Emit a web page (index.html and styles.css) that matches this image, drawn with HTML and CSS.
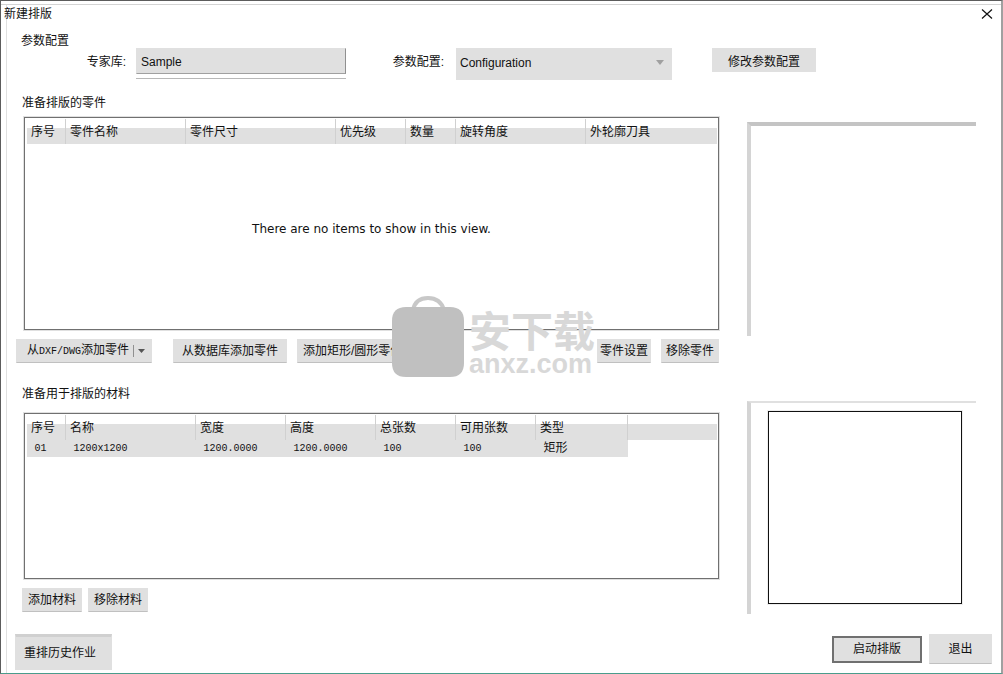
FILE: index.html
```html
<!DOCTYPE html>
<html lang="zh-CN">
<head>
<meta charset="utf-8">
<title>新建排版</title>
<link rel="stylesheet" href="styles.css">
</head>
<body>
<div class="window">
  <header class="titlebar">
    <h1 class="title">新建排版</h1>
    <button class="close" type="button" aria-label="关闭"><svg width="12" height="12" viewBox="0 0 12 12"><path d="M1 1.500 L11 10.500 M11 1.500 L1 10.500" stroke="#111" stroke-width="1.200" fill="none"/></svg></button>
  </header>

  <section class="config">
    <h2 class="heading">参数配置</h2>
    <div class="config-row">
      <label class="label" for="library">专家库:</label>
      <input class="field" id="library" type="text" value="Sample">
      <label class="label label-second" for="configuration">参数配置:</label>
      <div class="select-wrap">
        <select class="select" id="configuration"><option>Configuration</option></select>
        <svg class="arrow" width="8" height="5" viewBox="0 0 8 5"><path d="M0 0H8L4 5Z" fill="#a0a0a0"/></svg>
      </div>
      <button class="btn btn-config" type="button">修改参数配置</button>
    </div>
  </section>

  <main class="content">
    <section class="parts">
      <h2 class="heading">准备排版的零件</h2>
      <div class="panel panel-parts">
        <table class="grid">
          <colgroup><col class="c39"><col class="c120"><col class="c150"><col class="c70"><col class="c50"><col class="c130"><col></colgroup>
          <thead><tr><th>序号</th><th>零件名称</th><th>零件尺寸</th><th>优先级</th><th>数量</th><th>旋转角度</th><th>外轮廓刀具</th></tr></thead>
        </table>
        <p class="empty">There are no items to show in this view.</p>
      </div>
      <div class="actions">
        <button class="btn btn-split" type="button"><span>从<span class="mono">DXF/DWG</span>添加零件</span><span class="split"><svg width="7" height="4" viewBox="0 0 7 4"><path d="M0 0H7L3.500 4Z" fill="#555"/></svg></span></button>
        <button class="btn btn-db" type="button">从数据库添加零件</button>
        <button class="btn btn-shape" type="button">添加矩形/圆形零件</button>
        <button class="btn btn-setup" type="button">零件设置</button>
        <button class="btn btn-remove" type="button">移除零件</button>
        <div class="watermark" aria-hidden="true">
          <svg width="72" height="82" viewBox="0 0 72 82"><path d="M21 14C23 4 30 2 36 2S49 4 52 14" fill="none" stroke="#c8c8c8" stroke-width="4"/><path d="M14 11H58Q72 11 72 25V67Q72 81 58 81H14Q0 81 0 67V25Q0 11 14 11Z" fill="#c0c0c0"/></svg>
          <div class="brand"><span class="brand-name">安下载</span><span class="brand-site">anxz.com</span></div>
        </div>
      </div>
    </section>
    <div class="preview preview-part"></div>

    <section class="materials">
      <h2 class="heading">准备用于排版的材料</h2>
      <div class="panel panel-materials">
        <table class="grid">
          <colgroup><col class="c39"><col class="c130"><col class="c90"><col class="c90"><col class="c80"><col class="c80"><col class="c92"><col></colgroup>
          <thead><tr><th>序号</th><th>名称</th><th>宽度</th><th>高度</th><th>总张数</th><th>可用张数</th><th>类型</th><th></th></tr></thead>
          <tbody><tr><td>01</td><td>1200x1200</td><td>1200.0000</td><td>1200.0000</td><td>100</td><td>100</td><td class="kind">矩形</td><td></td></tr></tbody>
        </table>
      </div>
      <div class="actions actions-materials">
        <button class="btn" type="button">添加材料</button>
        <button class="btn" type="button">移除材料</button>
      </div>
    </section>
    <div class="preview preview-material"><div class="sheet"></div></div>
  </main>

  <footer class="footer">
    <button class="btn btn-history" type="button">重排历史作业</button>
    <button class="btn btn-start" type="button">启动排版</button>
    <button class="btn btn-exit" type="button">退出</button>
  </footer>
</div>
</body>
</html>
```
FILE: styles.css
```css
* { box-sizing: border-box; }

body {
  margin: 0;
  background: #fff;
  color: #111;
  font: 12px/16px "Liberation Sans", "Noto Sans CJK SC", sans-serif;
}

h1, h2, p { margin: 0; font-size: 12px; font-weight: 400; }

button, input, select { font: inherit; color: inherit; margin: 0; }

.window {
  min-height: 100vh;
  display: flex;
  flex-direction: column;
  border: 1px solid #5c5c5c;
  border-right: 2px solid #a0a0a0;
  border-bottom-color: #4a9c8c;
  box-shadow: inset 0 3px 0 #fff, inset 0 4px 0 #d4d4d4, inset 5px 0 0 #fff, inset 6px 0 0 #e0e0e0;
}

.titlebar {
  display: flex;
  justify-content: space-between;
  align-items: center;
  height: 25px;
  padding: 0 8px 0 3px;
}

.close { display: flex; padding: 0; border: 0; background: none; }

.config { padding: 7px 26px 0 20px; }
.config-row { display: flex; align-items: flex-start; margin-top: -1px; }
.label { width: 115px; padding-right: 10px; text-align: right; line-height: 29px; }
.label-second { width: 110px; padding-right: 12px; }

.field {
  width: 210px;
  height: 26px;
  padding: 3px 4px 2px;
  border: 1px solid #e0e0e0;
  border-right-color: #909090;
  border-bottom-color: #a0a0a0;
  background: #e0e0e0;
  box-shadow: 0 4px 0 #fff, 0 5px 0 #b8b8b8;
}

.select-wrap { position: relative; width: 216px; }
.select {
  width: 100%;
  height: 32px;
  padding: 0 4px 2px;
  border: 0;
  background: #e0e0e0;
  appearance: none;
}
.arrow { position: absolute; right: 8px; top: 12px; }

.btn {
  height: 24px;
  padding: 0 5px;
  border: 1px solid #e0e0e0;
  border-bottom-color: #c0c0c0;
  background: #e0e0e0;
  white-space: nowrap;
}

.btn-config { width: 104px; margin-left: 40px; border-bottom-color: #e0e0e0; padding-top: 4px; }

.content {
  display: grid;
  grid-template-columns: 695fr 229fr;
  column-gap: 28px;
  row-gap: 22px;
  padding: 15px 25px 0 23px;
}

.content .heading { margin-left: -2px; }

.panel {
  margin-top: 6px;
  border: 1px solid #707070;
  outline: 1px solid #e0e0e0;
  padding: 1px;
}
.panel-parts { height: 213px; }
.panel-materials { height: 166px; margin-top: 11px; }

.grid { width: 100%; border-collapse: collapse; table-layout: fixed; }
.grid th {
  height: 25px;
  padding: 0 0 0 4px;
  font-weight: 400;
  text-align: left;
  background: linear-gradient(#fff 9px, #e0e0e0 9px);
  border-left: 1px solid #d0d0d0;
}
.grid th:first-child { border-left-color: #fff; }
.grid td {
  height: 17px;
  padding: 0 0 0 8px;
  line-height: 16px;
  background: #e0e0e0;
  font-family: "Liberation Mono", "Noto Sans CJK SC", monospace;
  font-size: 10px;
}
.grid td.kind { font-size: 12px; }
.grid td:last-child { background: none; }

.c39 { width: 39px; }
.c50 { width: 50px; }
.c70 { width: 70px; }
.c80 { width: 80px; }
.c90 { width: 90px; }
.c92 { width: 92px; }
.c120 { width: 120px; }
.c130 { width: 130px; }
.c150 { width: 150px; }

.empty {
  padding-top: 77px;
  text-align: center;
  font-family: "DejaVu Sans", sans-serif;
  font-size: 12px;
}

.actions { position: relative; display: flex; align-items: center; margin-top: 8px; height: 26px; }
.actions-materials { gap: 6px; margin: 8px 0 0 -2px; }

.btn-split { display: flex; align-items: center; gap: 4px; width: 136px; margin-left: -8px; padding: 0 5px 0 10px; }
.split { display: flex; align-items: center; height: 12px; padding-left: 4px; border-left: 1px solid #909090; }
.mono { font-family: "Liberation Mono", monospace; font-size: 10px; }
.btn-db { width: 114px; margin-left: 21px; }
.btn-shape { width: 120px; margin-left: 10px; text-align: left; }
.btn-setup { width: 54px; margin-left: auto; padding: 0 2px; }
.btn-remove { width: 58px; margin-left: 10px; padding: 0 2px; }

.watermark {
  position: absolute;
  left: 368px;
  bottom: -14px;
  display: flex;
  gap: 5px;
  color: #d8d8d8;
}
.brand { display: flex; flex-direction: column; padding-top: 10px; }
.brand-name { font: 700 42px/46px "Noto Sans CJK SC", sans-serif; }
.brand-site { font: 700 27px/24px "Liberation Sans", sans-serif; }

.preview { border-left: 4px solid #d4d4d4; }
.preview-part { margin-top: 27px; height: 214px; border-top: 4px solid #c4c4c4; }
.preview-material { margin-top: 15px; height: 213px; border-top: 2px solid #e0e0e0; padding: 8px 14px 10px 17px; }
.sheet { height: 100%; border: 1px solid #111; outline: 1px solid #eee; }

.footer { display: flex; align-items: center; padding: 20px 9px 0 14px; }
.btn-history { width: 97px; height: 36px; border-top: 3px solid #d0d0d0; border-bottom: 0; text-align: left; padding: 0 8px 2px; }
.btn-start { width: 90px; height: 27px; margin: 0 0 6px auto; border: 2px solid #707070; }
.btn-exit { width: 63px; height: 30px; margin: 0 0 6px 7px; }
```
